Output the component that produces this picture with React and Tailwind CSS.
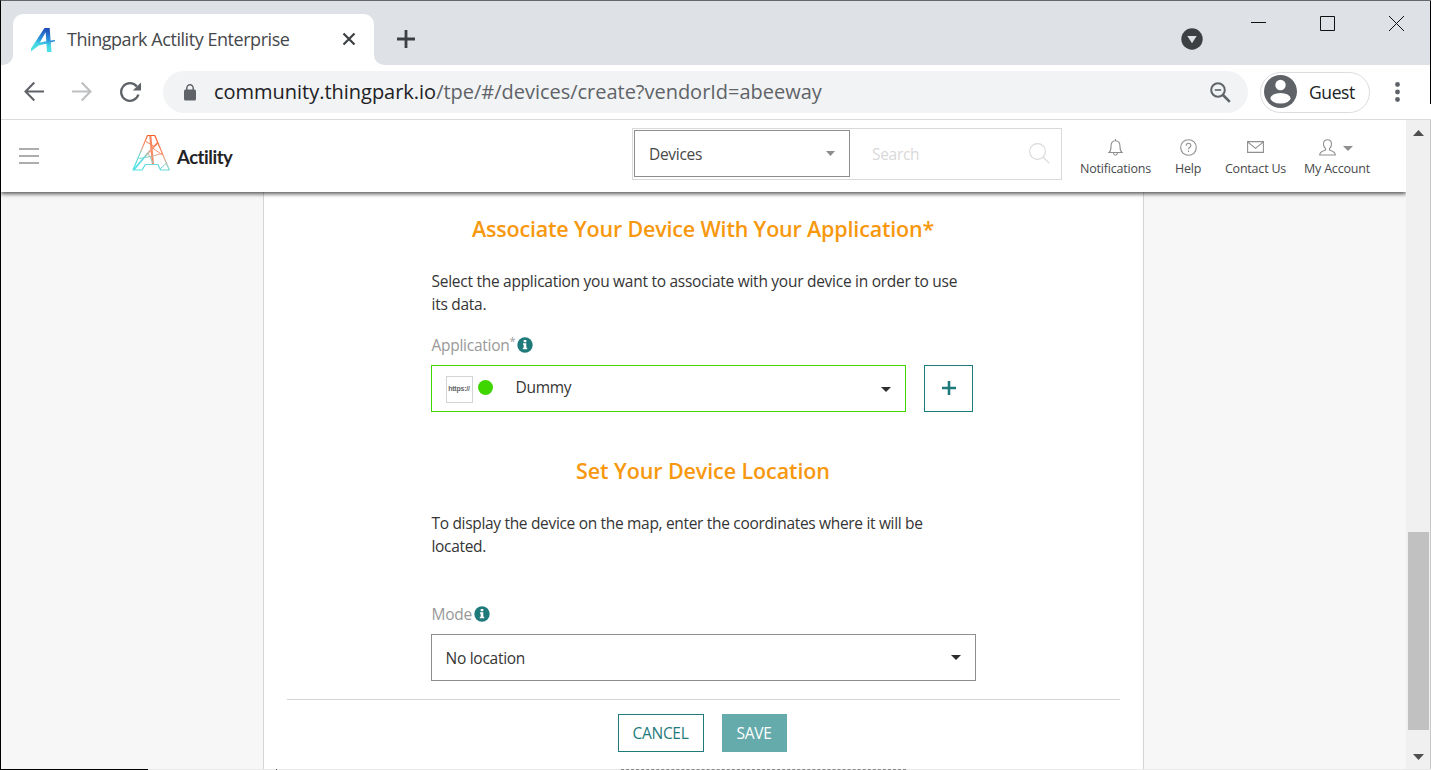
import React from "react";

const InfoIcon = () => (
  <svg width="16" height="16" viewBox="0 0 16 16">
    <circle cx="8" cy="8" r="7.7" fill="#1f7a7c" />
    <path d="M6.700 3h2.600v2.200H6.700zM6 6.300h3.300v4.400h.9v1.500H5.800v-1.500h.9V7.800H6z" fill="#fff" />
  </svg>
);

const Caret = ({ className, w = 10, h = 5 }) => (
  <svg className={className} width={w} height={h} viewBox="0 0 10 5" preserveAspectRatio="none">
    <path d="M0 0h10L5 5z" fill="currentColor" />
  </svg>
);

function TabStrip() {
  return (
    <div className="flex h-16 shrink-0 items-end bg-[#dee1e6]">
      <div className="h-[51px] w-3 bg-white">
        <div className="h-full w-full rounded-br-[10px] bg-[#dee1e6]" />
      </div>
      <div className="flex h-[51px] w-[361px] items-center rounded-t-[10px] bg-white pl-[18px]">
        <svg width="24" height="24" viewBox="0 0 24 24">
          <defs>
            <linearGradient id="fav" x1="0.6" y1="0" x2="0.4" y2="1">
              <stop offset="0" stopColor="#1f49b6" />
              <stop offset="0.45" stopColor="#2a8fdd" />
              <stop offset="0.7" stopColor="#45d6e4" />
              <stop offset="1" stopColor="#52e3e0" />
            </linearGradient>
          </defs>
          <path d="M13.500 0h5.200l.9 12.600 4.400-.6v1.300l-4.300 1.200.9 9.500h-4.600l-.6-8.300-7.600 1.900L0 23.600v-3.200zM14.600 4.200 8.900 14.400l6.400-1.100z" fill="url(#fav)" fillRule="evenodd" />
        </svg>
        <span className="ml-3 w-[262px] pb-px text-[18px] tracking-[-0.45px] whitespace-nowrap text-[#45484c]">Thingpark Actility Enterprise</span>
        <svg className="mb-px ml-[13px]" width="14" height="14" viewBox="0 0 14 14" stroke="#3c4043" strokeWidth="2.2">
          <path d="M1.5 1.5l11 11M12.5 1.5l-11 11" />
        </svg>
      </div>
      <div className="h-[51px] w-3 bg-white">
        <div className="h-full w-full rounded-bl-[10px] bg-[#dee1e6]" />
      </div>
      <svg className="mb-[17px] ml-[11px]" width="18" height="18" viewBox="0 0 18 18" stroke="#3c4043" strokeWidth="2.8">
        <path d="M9 0v18M0 9h18" />
      </svg>
      <div className="flex-1" />
      <svg className="mr-12 mb-[15px]" width="22" height="22" viewBox="0 0 22 22">
        <circle cx="11" cy="11" r="10.7" fill="#3c4043" />
        <path d="M6.3 8h9.4L11 15.2z" fill="#dee1e6" />
      </svg>
      <div className="flex h-16 w-[179px] items-start pt-[14px]">
        <svg width="155" height="16" viewBox="0 0 155 16" fill="none" stroke="#111" strokeWidth="1">
          <path d="M0 7.5h15M69.5 1.5h14v14h-14z" />
          <path d="M138 1l15 15M153 1l-15 15" />
        </svg>
      </div>
      <div className="h-16 w-px bg-black" />
    </div>
  );
}

function Toolbar() {
  return (
    <div className="flex h-[55px] shrink-0 items-center border-b border-[#dadcdc] bg-white">
      <svg className="ml-[23px]" width="20" height="20" viewBox="0 0 20 20" fill="none" stroke="#5f6368" strokeWidth="2.1">
        <path d="M20 9.500H1.800M10.300.5 1.500 9.500l8.800 9" />
      </svg>
      <svg className="ml-[28px]" width="20" height="20" viewBox="0 0 20 20" fill="none" stroke="#bdbfc1" strokeWidth="2.1">
        <path d="M0 9.500h18.200M9.700.5l8.800 9-8.800 9" />
      </svg>
      <svg className="mb-px ml-[28px]" width="22" height="20" viewBox="0 0 22 20" fill="none" stroke="#5f6368" strokeWidth="2.3">
        <path d="M18.4 12.5A8.8 8.8 0 1 1 16.8 4.4" />
        <path d="M21 .5V8.6h-8.2z" fill="#5f6368" stroke="none" />
      </svg>
      <div className="ml-[21px] flex h-[42px] w-[1085px] shrink-0 items-center rounded-full bg-[#f1f3f4] pl-[21px]">
        <svg className="mt-px" width="12" height="17" viewBox="0 0 13 17" preserveAspectRatio="none">
          <path d="M3 6.5V4.3a3.5 3.5 0 0 1 7 0v2.2" fill="none" stroke="#5f6368" strokeWidth="1.6" />
          <rect x="0" y="5.600" width="13" height="11" rx="1.6" fill="#5f6368" />
        </svg>
        <span className="ml-[18px] flex-1 text-[20px] tracking-[-0.02px] whitespace-nowrap text-[#5f6368]"><span className="text-[#202124]">community.thingpark.io</span>/tpe/#/devices/create?vendorId=abeeway</span>
        <svg className="mr-[17px]" width="21" height="21" viewBox="0 0 21 21" fill="none" stroke="#5f6368" strokeWidth="2">
          <circle cx="8" cy="8" r="6.8" />
          <path d="M4.8 8h6.4" strokeWidth="1.6" />
          <path d="M13 13l6.8 6.8" strokeWidth="2.6" />
        </svg>
      </div>
      <div className="ml-3 flex h-[41px] w-[110px] shrink-0 items-center rounded-full border border-[#dadce0] pl-[3px]">
        <svg className="mb-px" width="33" height="33" viewBox="0 0 33 33">
          <circle cx="16.5" cy="16.5" r="16.5" fill="#5f6368" />
          <circle cx="16.5" cy="10" r="5.2" fill="#fff" />
          <ellipse cx="16.5" cy="23.2" rx="10" ry="5.3" fill="#fff" />
        </svg>
        <span className="ml-3 text-[17.5px] tracking-[-0.4px] text-[#202124]">Guest</span>
      </div>
      <svg className="mb-px ml-[25px]" width="5" height="20" viewBox="0 0 5 20" fill="#5f6368">
        <circle cx="2.5" cy="2.5" r="2.4" /><circle cx="2.5" cy="10" r="2.4" /><circle cx="2.5" cy="17.5" r="2.4" />
      </svg>
      <div className="mb-auto ml-auto h-[39px] w-px bg-black" />
    </div>
  );
}

const Action = ({ className, label, children }) => (
  <div className={`flex shrink-0 flex-col items-center ${className}`}>
    <div className="flex h-[22px] items-center">{children}</div>
    <span className="mt-px text-[12.5px] leading-5 tracking-[-0.2px] whitespace-nowrap text-[#48494b]">{label}</span>
  </div>
);

function AppHeader() {
  return (
    <header className="relative z-10 flex h-[72px] shrink-0 bg-white shadow-[0_2px_4px_rgba(0,0,0,0.65)]">
      <svg className="mt-7 ml-[18px]" width="20" height="17" viewBox="0 0 20 17" stroke="#939393" strokeWidth="1.6">
        <path d="M0 1h20M0 8h20M0 15h20" />
      </svg>
      <svg className="mt-[14px] ml-[93px]" width="38" height="38" viewBox="0 0 38 38" fill="none" strokeLinejoin="round">
        <defs>
          <linearGradient id="logo" gradientUnits="userSpaceOnUse" x1="24" y1="4" x2="10" y2="34">
            <stop offset="0" stopColor="#fb5a25" />
            <stop offset="0.4" stopColor="#f79a75" />
            <stop offset="0.68" stopColor="#72d8d5" />
            <stop offset="1" stopColor="#4fe0e3" />
          </linearGradient>
        </defs>
        <g stroke="url(#logo)">
          <path d="M15.5 1.500h7.300L37.300 36h-8.800l-2.500-5.500H13.300L10.100 36H1z" strokeWidth="1.200" />
          <path d="M18.300 1.500l2.600 28.500" strokeWidth="2.200" stroke="#fa6a3b" strokeOpacity=".8" />
          <path d="M2 35.500l14-16.500L25.500 9" strokeWidth="1.800" />
          <path d="M7 24.500l14-2.500 9.500-2.800M14 7.500l9 5.500M20.500 14l10 7M16 19l5 10M28 35l6-5.500" strokeWidth="1" />
        </g>
      </svg>
      <span className="mt-[23px] ml-[7px] w-[57px] font-['Lato'] text-[18.500px] leading-7 font-bold tracking-[-0.45px] text-[#222326]">Actility</span>
      <div className="mt-2 ml-[398px] flex h-[52px] w-[430px] shrink-0 border border-[#d9d9d9] p-px">
        <div className="flex h-[47px] w-[216px] items-center justify-between border border-[#8d8d8d] pr-[14px] pl-[14px] text-[#8d8d8d]">
          <span className="mt-[2px] text-[15.500px] tracking-[-0.3px] text-[#484848]">Devices</span>
          <Caret className="mb-[1px]" w={9} />
        </div>
        <div className="flex flex-1 items-center justify-between pr-[10px] pl-[22px]">
          <span className="mt-px text-[15.500px] tracking-[-0.3px] text-[#d9d9d9]">Search</span>
          <svg className="mb-[2px]" width="21" height="21" viewBox="0 0 21 21" fill="none" stroke="#d8d8d8" strokeWidth="1.100">
            <circle cx="8.500" cy="8.500" r="7.900" /><path d="M14 14l6.300 6.300" />
          </svg>
        </div>
      </div>
      <div className="mt-4 flex pl-[18px]">
        <Action className="w-[71px]" label="Notifications">
          <svg width="15" height="17" viewBox="0 0 15 17" fill="none" stroke="#8f8f8f" strokeWidth="1.100">
            <path d="M1 13.500c1.700-1.300 2-2.700 2-6C3 4.200 4.500 1.700 7.500 1.700s4.500 2.500 4.500 5.800c0 3.300.3 4.700 2 6zM5.500 14c.2 1.500 1 2.200 2 2.200s1.800-.7 2-2.200M7.500 0v1.700" />
          </svg>
        </Action>
        <Action className="ml-6 w-[26px]" label="Help">
          <svg width="17" height="17" viewBox="0 0 17 17" fill="none" stroke="#8f8f8f" strokeWidth="1.100">
            <circle cx="8.500" cy="8.500" r="7.800" />
            <path d="M6.200 6.700c0-3.300 4.800-3.100 4.700-.3 0 1.800-2.400 1.900-2.400 3.900M8.500 11.600v1.400" />
          </svg>
        </Action>
        <Action className="ml-6 w-[61px]" label="Contact Us">
          <svg width="17" height="12" viewBox="0 0 17 12" fill="none" stroke="#8f8f8f" strokeWidth="1.100">
            <path d="M.6.6h15.800v10.800H.6zM.6.900l7.900 6.500L16.400.900" />
          </svg>
        </Action>
        <Action className="ml-[17px] w-[68px]" label="My Account">
          <svg className="-ml-[2px]" width="17" height="17" viewBox="0 0 17 17" fill="none" stroke="#8f8f8f" strokeWidth="1.100">
            <path d="M8.500.7C5.800.7 4.500 2.600 4.500 5c0 2.200.800 3.700 2 4.700v1.400c-3 1-5.800 1.300-5.800 4.900h15.600c0-3.600-2.800-3.900-5.800-4.900V9.700c1.200-1 2-2.500 2-4.700 0-2.400-1.300-4.300-4-4.300z" />
          </svg>
          <Caret className="mt-[3px] ml-[7px] text-[#8f8f8f]" />
        </Action>
      </div>
    </header>
  );
}

function DeviceForm() {
  return (
    <main className="flex flex-1 justify-center bg-[#f7f7f7] pr-[1px]">
      <div className="flex w-[881px] flex-col border-x border-[#d5d5d5] bg-white pl-[23px] pr-[23px]">
        <div className="ml-[144px] w-[545px] text-[15.500px] tracking-[-0.27px] text-[#353535]">
          <h2 className="mt-[22px] text-center text-[21.500px] leading-[30px] font-semibold tracking-[-0.18px] text-[#f7980f]">Associate Your Device With Your Application*</h2>
          <p className="mt-[26px] pl-px leading-[23px] whitespace-nowrap">Select the application you want to associate with your device in order to use<br />its data.</p>
          <div className="mt-[18px] flex h-[23px] items-center pl-px text-[#999]">
            <span>Application</span><span className="mb-2 text-[11px]">*</span>
            <span className="mb-px ml-[2px]"><InfoIcon /></span>
          </div>
          <div className="mt-[8px] flex">
            <div className="flex h-[47px] w-[475px] items-center border border-[#3fd600] pr-[14px] pl-[14px]">
              <span className="mt-[2px] flex h-[27px] w-[27px] items-center justify-center border border-[#d4d4d4] font-['Liberation_Sans'] text-[7px] font-bold tracking-[-0.2px] text-[#666]">https://</span>
              <span className="mb-[2px] ml-[5px] h-[15px] w-[15px] rounded-full bg-[#3fd600]" />
              <span className="mb-[2px] ml-[23px] flex-1">Dummy</span>
              <Caret className="mt-[2px] text-[#2d2d2d]" />
            </div>
            <button className="ml-[18px] flex h-[47px] w-[49px] items-center justify-center border border-[#1f7a7c]">
              <svg className="mb-[2px] ml-px" width="14" height="14" viewBox="0 0 14 14" stroke="#1f7a7c" strokeWidth="2.600"><path d="M7 0v14M0 7h14" /></svg>
            </button>
          </div>
          <h2 className="mt-[44px] text-center text-[21.500px] leading-[30px] font-semibold tracking-[-0.1px] text-[#f7980f]">Set Your Device Location</h2>
          <p className="mt-[26px] pl-px leading-[23px] tracking-[-0.32px] whitespace-nowrap">To display the device on the map, enter the coordinates where it will be<br />located.</p>
          <div className="mt-[45px] flex h-[23px] items-center pl-px text-[#999]">
            <span>Mode</span><span className="mb-px ml-[2px]"><InfoIcon /></span>
          </div>
          <div className="mt-[8px] flex h-[47px] w-[545px] items-center justify-between border border-[#8d8d8d] px-[14px]">
            <span className="mt-[2px]">No location</span><Caret className="mb-px text-[#2d2d2d]" />
          </div>
        </div>
        <div className="mt-[18px] flex justify-center gap-[18px] border-t border-[#d5d5d5] pt-[14px] pr-[2px] text-[15.500px] tracking-[-0.3px]">
          <button className="h-[38px] w-[86px] border border-[#1f7a7c] pt-[2px] text-[#1f7a7c]">CANCEL</button>
          <button className="h-[38px] w-[65px] bg-[#65abab] pt-[2px] text-white">SAVE</button>
        </div>
      </div>
    </main>
  );
}

export default function App() {
  return (
    <div className="flex h-[770px] w-[1431px] flex-col overflow-hidden border-t border-l border-t-[#66676a] border-l-black bg-white font-['Open_Sans',sans-serif]">
      <TabStrip />
      <Toolbar />
      <div className="flex min-h-0 flex-1">
        <div className="flex w-[1405px] flex-col overflow-hidden">
          <AppHeader />
          <DeviceForm />
        </div>
        <div className="flex w-[25px] flex-col items-center border-r border-[#c8c8c8] bg-[#f0f0f0] pt-[10px] text-[#505050]">
          <Caret className="rotate-180" w={11} h={6} />
          <div className="mt-[396px] ml-px h-[198px] w-[21px] shrink-0 bg-[#c1c1c1]" />
          <Caret className="mt-6" w={11} h={6} />
        </div>
      </div>
      <div className="flex h-px shrink-0 bg-[#e9e9e9]">
        <div className="w-[147px] bg-black" />
        <div className="ml-[128px] w-px bg-[#444]" />
        <div className="ml-[344px] w-[285px] border-t border-dashed border-[#888]" />
      </div>
    </div>
  );
}
